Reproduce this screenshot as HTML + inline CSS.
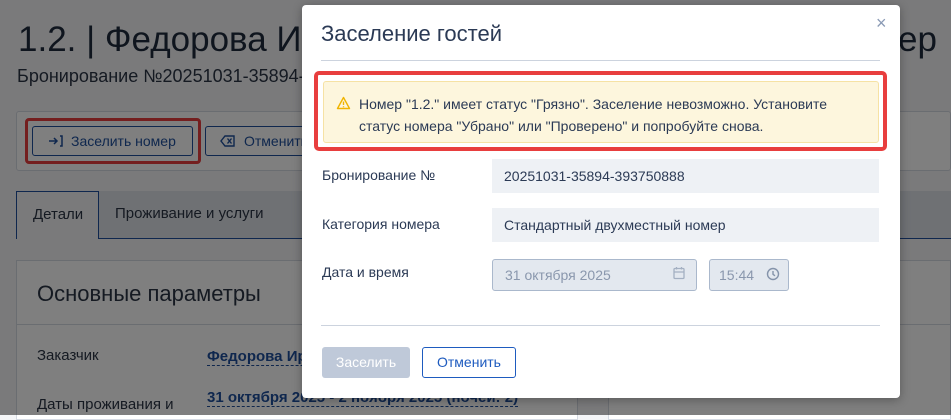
<!DOCTYPE html>
<html><head><meta charset="utf-8"><style>
*{box-sizing:border-box;margin:0;padding:0}
body{width:951px;height:415px;overflow:hidden;position:relative;background:#f4f5f7;font-family:"Liberation Sans","Noto Sans CJK SC",sans-serif;color:#2b3445}
.abs{position:absolute}
.ov{position:absolute;left:0;top:0;width:951px;height:415px;background:rgba(0,0,0,.5)}
</style></head><body>
<!-- background page -->
<div class="abs" style="left:18px;top:20px;font-size:35px;color:#1e2a3c;white-space:nowrap">1.2. | Федорова Ирина</div>
<div class="abs" style="right:14px;top:20px;font-size:35px;color:#1e2a3c;white-space:nowrap">номер</div>
<div class="abs" style="left:17px;top:66px;font-size:18px;color:#2b3445;white-space:nowrap">Бронирование №20251031-35894-393750888</div>
<div class="abs" style="left:16px;top:111px;width:935px;height:60px;background:#fff;border:1px solid #d5dae2;border-radius:3px"></div>
<div class="abs" style="left:32px;top:126px;width:161px;height:30px;border:1px solid #1e4f9c;border-radius:3px;font-size:14px;color:#1e4f9c;padding:6px 0 0 38px;background:#fff">Заселить номер</div>
<svg class="abs" style="left:48px;top:134px" width="16" height="14" viewBox="0 0 16 14"><path d="M1 7h8M6 4l3 3-3 3M12 2h2v10h-2" fill="none" stroke="#1e4f9c" stroke-width="1.5"/></svg>
<div class="abs" style="left:25px;top:118px;width:176px;height:46px;border:3px solid #e83e3e;border-radius:4px"></div>
<div class="abs" style="left:205px;top:126px;width:150px;height:30px;border:1px solid #1e4f9c;border-radius:3px;font-size:14px;color:#1e4f9c;padding:6px 0 0 38px;background:#fff">Отменить</div>
<svg class="abs" style="left:220px;top:134px" width="16" height="14" viewBox="0 0 16 14"><path d="M5 2h9v10H5L1 7z M7.5 4.5l4 5M11.5 4.5l-4 5" fill="none" stroke="#1e4f9c" stroke-width="1.4"/></svg>
<div class="abs" style="left:16px;top:191px;width:935px;height:48px;background:#dfe3e9;border-bottom:1px solid #1e4f9c"></div>
<div class="abs" style="left:16px;top:191px;width:83px;height:48px;background:#f4f5f7;border:1px solid #1e4f9c;border-bottom:none;font-size:15px;padding:14px 0 0 16px">Детали</div>
<div class="abs" style="left:115px;top:205px;font-size:15px;white-space:nowrap">Проживание и услуги</div>
<div class="abs" style="left:16px;top:260px;width:562px;height:160px;background:#fff;border:1px solid #d5dae2"></div>
<div class="abs" style="left:608px;top:260px;width:343px;height:160px;background:#fff;border:1px solid #d5dae2"></div>
<div class="abs" style="left:16px;top:324px;width:935px;height:1px;background:#d5dae2"></div>
<div class="abs" style="left:37px;top:281px;font-size:22px;color:#2b3445">Основные параметры</div>
<div class="abs" style="left:37px;top:347px;font-size:15px">Заказчик</div>
<div class="abs" style="left:207px;top:348px;font-size:15px;font-weight:bold;color:#1e4f9c;border-bottom:1px dashed #1e4f9c;white-space:nowrap">Федорова Ирина</div>
<div class="abs" style="left:37px;top:396px;font-size:15px;white-space:nowrap">Даты проживания и</div>
<div class="abs" style="left:207px;top:389px;font-size:15px;font-weight:bold;color:#1e4f9c;border-bottom:1px dashed #1e4f9c;white-space:nowrap">31 октября 2025 - 2 ноября 2025 (ночей: 2)</div>
<div class="ov"></div>
<!-- modal -->
<div class="abs" style="left:302px;top:5px;width:598px;height:393px;background:#fff;border-radius:4px;box-shadow:0 2px 10px rgba(0,0,0,.3)"></div>
<div class="abs" style="left:321px;top:21px;font-size:22px;color:#2b3a55">Заселение гостей</div>
<div class="abs" style="left:876px;top:13px;font-size:18px;color:#8a9ab5">×</div>
<div class="abs" style="left:321px;top:60px;width:559px;height:1px;background:#ccd3de"></div>
<div class="abs" style="left:323px;top:81px;width:556px;height:62px;background:#fdf6dd;border:1px solid #f6e2a4;border-radius:3px"></div>
<svg class="abs" style="left:336px;top:96px" width="15" height="14" viewBox="0 0 15 14"><path d="M7.5 1.5L13.5 12.5H1.5Z" fill="none" stroke="#f0b400" stroke-width="1.4" stroke-linejoin="round"/><path d="M7.5 5.5v3.5M7.5 10.3v1" stroke="#f0b400" stroke-width="1.4"/></svg>
<div class="abs" style="left:359px;top:93px;width:500px;font-size:14px;line-height:22px;color:#2b3a55">Номер "1.2." имеет статус "Грязно". Заселение невозможно. Установите статус номера "Убрано" или "Проверено" и попробуйте снова.</div>
<div class="abs" style="left:314px;top:71px;width:573px;height:80px;border:4px solid #e83e3e;border-radius:5px"></div>
<div class="abs" style="left:322px;top:167px;font-size:14px;color:#2b3a55">Бронирование №</div>
<div class="abs" style="left:492px;top:159px;width:387px;height:34px;background:#eef1f5;font-size:14px;padding:9px 0 0 12px;color:#2b3a55">20251031-35894-393750888</div>
<div class="abs" style="left:322px;top:216px;font-size:14px;color:#2b3a55">Категория номера</div>
<div class="abs" style="left:492px;top:208px;width:387px;height:34px;background:#eef1f5;font-size:14px;padding:9px 0 0 12px;color:#2b3a55">Стандартный двухместный номер</div>
<div class="abs" style="left:322px;top:264px;font-size:14px;color:#2b3a55">Дата и время</div>
<div class="abs" style="left:492px;top:259px;width:205px;height:32px;background:#e3e8ef;border:1px solid #aab8cc;border-radius:3px;font-size:14px;padding:7px 0 0 12px;color:#8a97ad">31 октября 2025</div>
<svg class="abs" style="left:673px;top:266px" width="12" height="14" viewBox="0 0 12 14"><rect x="1" y="2.5" width="10" height="10" rx="1" fill="none" stroke="#a4b0c2" stroke-width="1.3"/><path d="M1 6h10M3.5 1v2.5M8.5 1v2.5" stroke="#a4b0c2" stroke-width="1.3"/></svg>
<div class="abs" style="left:709px;top:259px;width:80px;height:32px;background:#e3e8ef;border:1px solid #aab8cc;border-radius:3px;font-size:14px;padding:7px 0 0 9px;color:#8a97ad">15:44</div>
<svg class="abs" style="left:766px;top:267px" width="14" height="14" viewBox="0 0 14 14"><circle cx="7" cy="7" r="5.5" fill="none" stroke="#8493aa" stroke-width="1.4"/><path d="M7 4v3.3l2 1.5" fill="none" stroke="#8493aa" stroke-width="1.4"/></svg>
<div class="abs" style="left:321px;top:325px;width:559px;height:1px;background:#ccd3de"></div>
<div class="abs" style="left:322px;top:347px;width:88px;height:31px;background:#bfc9d9;border-radius:3px;color:#fff;font-size:14px;text-align:center;padding-top:7px">Заселить</div>
<div class="abs" style="left:422px;top:347px;width:94px;height:31px;border:1px solid #1e5bbf;border-radius:3px;color:#1e5bbf;font-size:14px;text-align:center;padding-top:6px">Отменить</div>
</body></html>
